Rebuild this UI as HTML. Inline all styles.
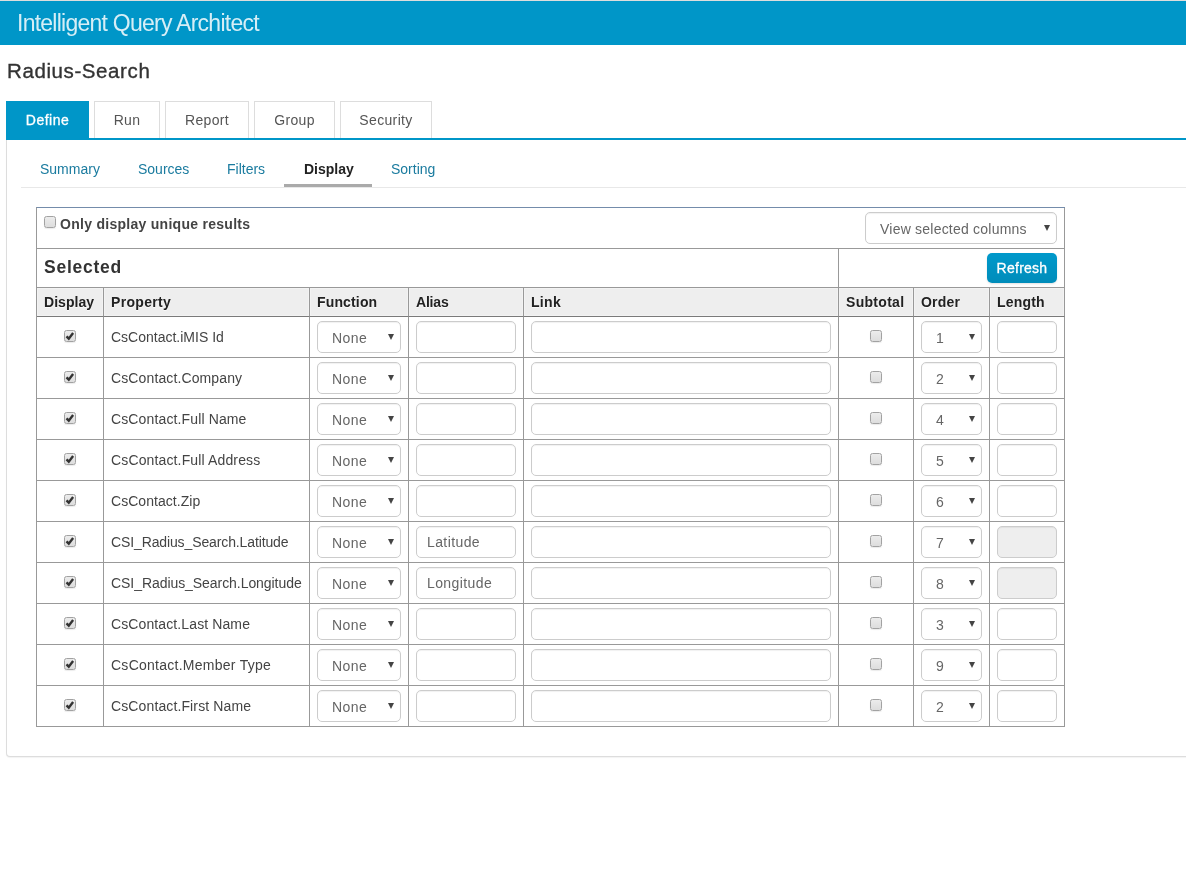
<!DOCTYPE html>
<html lang="en">
<head>
<meta charset="utf-8">
<title>Intelligent Query Architect</title>
<style>
*{box-sizing:border-box;}
html,body{margin:0;padding:0;}
body{width:1186px;height:878px;overflow:hidden;background:#fff;position:relative;
  font-family:"Liberation Sans",sans-serif;font-size:14px;color:#444;}
#wrap{position:absolute;left:0;top:0;width:1186px;height:878px;overflow:hidden;will-change:transform;}
.abs{position:absolute;}
#topline{left:0;top:0;width:1186px;height:1px;background:#ddd;}
#hdr{left:0;top:1px;width:1186px;height:44px;background:#0096c8;}
#hdr span{position:absolute;left:17px;top:9px;font-size:23px;line-height:26px;color:#fff;white-space:nowrap;opacity:.84;letter-spacing:-.75px;}
#title{left:7px;top:57px;font-size:20.5px;line-height:28px;color:#333;white-space:nowrap;letter-spacing:.6px;-webkit-text-stroke:.35px #333;}
/* main tabs */
.tab{position:absolute;top:101px;height:37px;border:1px solid #ddd;border-bottom:none;background:#fff;
  color:#555;text-align:center;line-height:36px;white-space:nowrap;letter-spacing:.35px;}
.tab.on{background:#0096c8;border-color:#0096c8;color:#fff;height:38px;letter-spacing:.5px;-webkit-text-stroke:.3px #fff;}
#tabline{left:6px;top:138px;width:1180px;height:2px;background:#0096c8;}
#panel{left:6px;top:140px;width:1300px;height:617px;border:1px solid #ddd;border-top:none;
  border-radius:0 0 4px 4px;box-shadow:0 1px 1px rgba(0,0,0,.05);background:#fff;}
/* sub tabs */
#subline{left:21px;top:187px;width:1165px;height:1px;background:#e8e8e8;}
.st{position:absolute;top:160px;height:18px;line-height:18px;color:#1a7b9f;white-space:nowrap;}
.st.on{color:#222;font-weight:bold;}
#stbar{left:284px;top:184px;width:88px;height:3px;background:#aaa;}
/* grid */
#grid{position:absolute;left:36px;top:207px;width:1029px;border-collapse:separate;border-spacing:0;table-layout:fixed;
  border-left:1px solid #999;border-top:1px solid #748cab;}
#grid td,#grid th{border-right:1px solid #999;border-bottom:1px solid #999;padding:0;margin:0;position:relative;
  text-align:left;vertical-align:top;font-weight:normal;white-space:nowrap;overflow:visible;}
#grid th{background:#eee;font-weight:bold;height:29px;line-height:28px;padding-left:7px;color:#222;border-bottom-color:#7a7a7a;box-shadow:inset 0 0 0 1px #f3f3f3;text-shadow:0 1px 0 rgba(255,255,255,.7);}
#grid tr.r td{height:41px;}
#grid td.p{padding-left:7px;line-height:40px;color:#444;}
.cb{position:absolute;width:12px;height:12px;border:1px solid #a2a2a2;border-radius:2.5px;
  background:linear-gradient(#ececec,#dddddd);box-shadow:0 1px 1px rgba(0,0,0,.08);}
.cb.ck svg{position:absolute;left:-1px;top:-1px;}
.inp{position:absolute;top:4px;height:32px;border:1px solid #ccc;border-radius:5px;background:#fff;color:#666;
  line-height:30px;padding-left:10px;letter-spacing:.4px;box-shadow:inset 0 1px 1px rgba(0,0,0,.06);}
.inp.dis{background:#eee;}
.sel{padding-left:14px;line-height:32px;}
.sel i{position:absolute;right:6px;top:12px;width:0;height:0;border-left:3.5px solid transparent;border-right:3.5px solid transparent;border-top:6px solid #444;}
#btn{position:absolute;left:148px;top:4px;width:70px;height:30px;border-radius:5px;background:linear-gradient(#0099cb,#008cba);box-shadow:0 1px 2px rgba(0,0,0,.12);color:#fff;
  text-align:center;line-height:31px;letter-spacing:.25px;-webkit-text-stroke:.3px #fff;}
</style>
</head>
<body>
<div id="wrap">
<div class="abs" id="topline"></div>
<div class="abs" id="hdr"><span>Intelligent Query Architect</span></div>
<div class="abs" id="title">Radius-Search</div>

<div class="tab on" style="left:6px;width:83px;">Define</div>
<div class="tab" style="left:94px;width:66px;">Run</div>
<div class="tab" style="left:165px;width:84px;">Report</div>
<div class="tab" style="left:254px;width:81px;">Group</div>
<div class="tab" style="left:340px;width:92px;">Security</div>
<div class="abs" id="panel"></div>
<div class="abs" id="tabline"></div>

<div class="st" style="left:40px;">Summary</div>
<div class="st" style="left:138px;">Sources</div>
<div class="st" style="left:227px;">Filters</div>
<div class="st on" style="left:304px;">Display</div>
<div class="st" style="left:391px;">Sorting</div>
<div class="abs" id="stbar"></div>
<div class="abs" id="subline"></div>

<table id="grid">
<colgroup><col style="width:67px"><col style="width:206px"><col style="width:99px"><col style="width:115px"><col style="width:315px"><col style="width:75px"><col style="width:76px"><col style="width:75px"></colgroup>
<tr><td colspan="8" style="height:41px;">
  <span class="cb" style="left:7px;top:8px;"></span>
  <b style="position:absolute;left:23px;top:7px;line-height:18px;color:#444;letter-spacing:.28px;">Only display unique results</b>
  <div class="inp sel" style="left:828px;width:192px;letter-spacing:.22px;">View selected columns<i></i></div>
</td></tr>
<tr><td colspan="5" style="height:39px;"><b style="position:absolute;left:7px;top:6px;font-size:17.5px;line-height:24px;color:#333;letter-spacing:.75px;">Selected</b></td>
<td colspan="3"><div id="btn">Refresh</div></td></tr>
<tr><th style="letter-spacing:0.05px">Display</th><th style="letter-spacing:0.33px">Property</th><th style="letter-spacing:0.15px">Function</th><th style="letter-spacing:-0.2px">Alias</th><th style="letter-spacing:0.3px">Link</th><th style="letter-spacing:0.3px">Subtotal</th><th style="letter-spacing:0.2px">Order</th><th style="letter-spacing:0.2px">Length</th></tr>
<!--ROWS-->
<tr class="r"><td><span class="cb ck" style="left:27px;top:13px;"><svg width="12" height="12" viewBox="0 0 12 12"><path d="M2.5 6.3 L4.8 8.7 L9.1 3" fill="none" stroke="#333" stroke-width="2.4"/></svg></span></td><td class="p" style="letter-spacing:0px">CsContact.iMIS Id</td>
<td><div class="inp sel" style="left:7px;width:84px;">None<i></i></div></td>
<td><div class="inp" style="left:7px;width:100px;"></div></td>
<td><div class="inp" style="left:7px;width:300px;"></div></td>
<td><span class="cb" style="left:31px;top:13px;"></span></td>
<td><div class="inp sel" style="left:7px;width:61px;">1<i></i></div></td>
<td><div class="inp" style="left:7px;width:60px;"></div></td></tr>
<tr class="r"><td><span class="cb ck" style="left:27px;top:13px;"><svg width="12" height="12" viewBox="0 0 12 12"><path d="M2.5 6.3 L4.8 8.7 L9.1 3" fill="none" stroke="#333" stroke-width="2.4"/></svg></span></td><td class="p" style="letter-spacing:0.12px">CsContact.Company</td>
<td><div class="inp sel" style="left:7px;width:84px;">None<i></i></div></td>
<td><div class="inp" style="left:7px;width:100px;"></div></td>
<td><div class="inp" style="left:7px;width:300px;"></div></td>
<td><span class="cb" style="left:31px;top:13px;"></span></td>
<td><div class="inp sel" style="left:7px;width:61px;">2<i></i></div></td>
<td><div class="inp" style="left:7px;width:60px;"></div></td></tr>
<tr class="r"><td><span class="cb ck" style="left:27px;top:13px;"><svg width="12" height="12" viewBox="0 0 12 12"><path d="M2.5 6.3 L4.8 8.7 L9.1 3" fill="none" stroke="#333" stroke-width="2.4"/></svg></span></td><td class="p" style="letter-spacing:0.13px">CsContact.Full Name</td>
<td><div class="inp sel" style="left:7px;width:84px;">None<i></i></div></td>
<td><div class="inp" style="left:7px;width:100px;"></div></td>
<td><div class="inp" style="left:7px;width:300px;"></div></td>
<td><span class="cb" style="left:31px;top:13px;"></span></td>
<td><div class="inp sel" style="left:7px;width:61px;">4<i></i></div></td>
<td><div class="inp" style="left:7px;width:60px;"></div></td></tr>
<tr class="r"><td><span class="cb ck" style="left:27px;top:13px;"><svg width="12" height="12" viewBox="0 0 12 12"><path d="M2.5 6.3 L4.8 8.7 L9.1 3" fill="none" stroke="#333" stroke-width="2.4"/></svg></span></td><td class="p" style="letter-spacing:0.14px">CsContact.Full Address</td>
<td><div class="inp sel" style="left:7px;width:84px;">None<i></i></div></td>
<td><div class="inp" style="left:7px;width:100px;"></div></td>
<td><div class="inp" style="left:7px;width:300px;"></div></td>
<td><span class="cb" style="left:31px;top:13px;"></span></td>
<td><div class="inp sel" style="left:7px;width:61px;">5<i></i></div></td>
<td><div class="inp" style="left:7px;width:60px;"></div></td></tr>
<tr class="r"><td><span class="cb ck" style="left:27px;top:13px;"><svg width="12" height="12" viewBox="0 0 12 12"><path d="M2.5 6.3 L4.8 8.7 L9.1 3" fill="none" stroke="#333" stroke-width="2.4"/></svg></span></td><td class="p" style="letter-spacing:0.05px">CsContact.Zip</td>
<td><div class="inp sel" style="left:7px;width:84px;">None<i></i></div></td>
<td><div class="inp" style="left:7px;width:100px;"></div></td>
<td><div class="inp" style="left:7px;width:300px;"></div></td>
<td><span class="cb" style="left:31px;top:13px;"></span></td>
<td><div class="inp sel" style="left:7px;width:61px;">6<i></i></div></td>
<td><div class="inp" style="left:7px;width:60px;"></div></td></tr>
<tr class="r"><td><span class="cb ck" style="left:27px;top:13px;"><svg width="12" height="12" viewBox="0 0 12 12"><path d="M2.5 6.3 L4.8 8.7 L9.1 3" fill="none" stroke="#333" stroke-width="2.4"/></svg></span></td><td class="p" style="letter-spacing:-0.12px">CSI_Radius_Search.Latitude</td>
<td><div class="inp sel" style="left:7px;width:84px;">None<i></i></div></td>
<td><div class="inp" style="left:7px;width:100px;">Latitude</div></td>
<td><div class="inp" style="left:7px;width:300px;"></div></td>
<td><span class="cb" style="left:31px;top:13px;"></span></td>
<td><div class="inp sel" style="left:7px;width:61px;">7<i></i></div></td>
<td><div class="inp dis" style="left:7px;width:60px;"></div></td></tr>
<tr class="r"><td><span class="cb ck" style="left:27px;top:13px;"><svg width="12" height="12" viewBox="0 0 12 12"><path d="M2.5 6.3 L4.8 8.7 L9.1 3" fill="none" stroke="#333" stroke-width="2.4"/></svg></span></td><td class="p" style="letter-spacing:-0.06px">CSI_Radius_Search.Longitude</td>
<td><div class="inp sel" style="left:7px;width:84px;">None<i></i></div></td>
<td><div class="inp" style="left:7px;width:100px;">Longitude</div></td>
<td><div class="inp" style="left:7px;width:300px;"></div></td>
<td><span class="cb" style="left:31px;top:13px;"></span></td>
<td><div class="inp sel" style="left:7px;width:61px;">8<i></i></div></td>
<td><div class="inp dis" style="left:7px;width:60px;"></div></td></tr>
<tr class="r"><td><span class="cb ck" style="left:27px;top:13px;"><svg width="12" height="12" viewBox="0 0 12 12"><path d="M2.5 6.3 L4.8 8.7 L9.1 3" fill="none" stroke="#333" stroke-width="2.4"/></svg></span></td><td class="p" style="letter-spacing:0.11px">CsContact.Last Name</td>
<td><div class="inp sel" style="left:7px;width:84px;">None<i></i></div></td>
<td><div class="inp" style="left:7px;width:100px;"></div></td>
<td><div class="inp" style="left:7px;width:300px;"></div></td>
<td><span class="cb" style="left:31px;top:13px;"></span></td>
<td><div class="inp sel" style="left:7px;width:61px;">3<i></i></div></td>
<td><div class="inp" style="left:7px;width:60px;"></div></td></tr>
<tr class="r"><td><span class="cb ck" style="left:27px;top:13px;"><svg width="12" height="12" viewBox="0 0 12 12"><path d="M2.5 6.3 L4.8 8.7 L9.1 3" fill="none" stroke="#333" stroke-width="2.4"/></svg></span></td><td class="p" style="letter-spacing:0.26px">CsContact.Member Type</td>
<td><div class="inp sel" style="left:7px;width:84px;">None<i></i></div></td>
<td><div class="inp" style="left:7px;width:100px;"></div></td>
<td><div class="inp" style="left:7px;width:300px;"></div></td>
<td><span class="cb" style="left:31px;top:13px;"></span></td>
<td><div class="inp sel" style="left:7px;width:61px;">9<i></i></div></td>
<td><div class="inp" style="left:7px;width:60px;"></div></td></tr>
<tr class="r"><td><span class="cb ck" style="left:27px;top:13px;"><svg width="12" height="12" viewBox="0 0 12 12"><path d="M2.5 6.3 L4.8 8.7 L9.1 3" fill="none" stroke="#333" stroke-width="2.4"/></svg></span></td><td class="p" style="letter-spacing:0.12px">CsContact.First Name</td>
<td><div class="inp sel" style="left:7px;width:84px;">None<i></i></div></td>
<td><div class="inp" style="left:7px;width:100px;"></div></td>
<td><div class="inp" style="left:7px;width:300px;"></div></td>
<td><span class="cb" style="left:31px;top:13px;"></span></td>
<td><div class="inp sel" style="left:7px;width:61px;">2<i></i></div></td>
<td><div class="inp" style="left:7px;width:60px;"></div></td></tr>
<!--/ROWS-->
</table>
</div>
</body>
</html>
